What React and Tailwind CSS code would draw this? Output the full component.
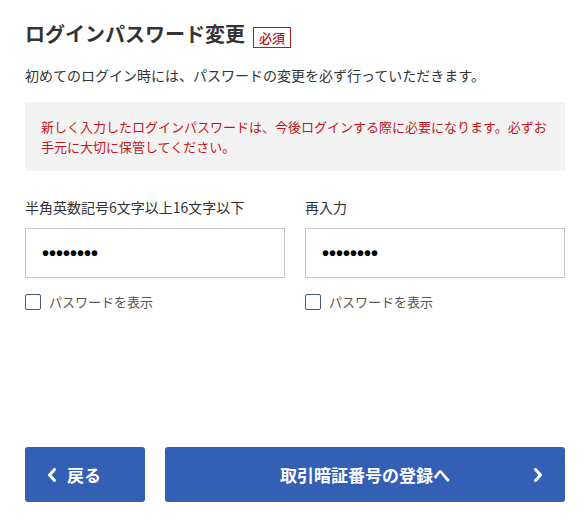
import React from "react";

const font = { fontFamily: '"Noto Sans CJK JP", "Noto Sans", sans-serif' };

function Check() {
  return (
    <label className="flex items-center h-[20px] gap-[8px] text-[13px] text-[#555]">
      <span className="w-[16px] h-[16px] border border-[#4b5b78] rounded-[2px] bg-white shrink-0" />
      <span>パスワードを表示</span>
    </label>
  );
}

function Field({ label }) {
  return (
    <div className="flex flex-col">
      <div className="text-[14px] leading-[20px] text-[#333]">{label}</div>
      <div className="mt-[11px] h-[50px] border border-[#c8c8c8] bg-white flex items-center pl-[16px]">
        <span className="text-[20px] font-bold text-black" style={{ fontFamily: '"Liberation Sans", sans-serif' }}>
          ••••••••
        </span>
      </div>
      <div className="mt-[14px]">
        <Check />
      </div>
    </div>
  );
}

export default function App() {
  return (
    <div className="w-[585px] h-[521px] bg-white pt-[17px] pl-[25px] pr-[20px]" style={font}>
      <h1 className="flex items-center h-[34px]">
        <span className="text-[20px] font-bold text-[#333] leading-[34px]">ログインパスワード変更</span>
        <span className="ml-[8px] mt-[6px] h-[21px] px-[5px] border border-[#b71c1c] text-[#b71c1c] text-[13px] leading-[19px] font-medium">
          必須
        </span>
      </h1>
      <p className="mt-[14px] text-[14px] leading-[20px] text-[#333]">
        初めてのログイン時には、パスワードの変更を必ず行っていただきます。
      </p>
      <div className="mt-[17px] bg-[#f3f3f3] px-[16px] pt-[15px] pb-[14px] text-[13px] leading-[20px] text-[#c4161c]">
        新しく入力したログインパスワードは、今後ログインする際に必要になります。必ずお手元に大切に保管してください。
      </div>
      <div className="mt-[26px] grid grid-cols-2 gap-x-[20px]">
        <Field label="半角英数記号6文字以上16文字以下" />
        <Field label="再入力" />
      </div>
      <div className="mt-[135px] flex gap-[20px]">
        <button className="w-[120px] h-[55px] rounded-[3px] bg-[#3360b5] text-white flex items-center pl-[22px] gap-[10px] text-[17px] font-bold">
          <svg width="10" height="14" viewBox="0 0 10 14">
            <polyline points="7.5,1.5 2.5,7 7.5,12.5" fill="none" stroke="white" strokeWidth="3" strokeLinecap="round" strokeLinejoin="round" />
          </svg>
          <span>戻る</span>
        </button>
        <button className="flex-1 h-[55px] rounded-[3px] bg-[#3360b5] text-white flex items-center px-[22px] text-[17px] font-bold">
          <span className="w-[10px]" />
          <span className="flex-1 text-center">取引暗証番号の登録へ</span>
          <svg width="10" height="14" viewBox="0 0 10 14">
            <polyline points="2.5,1.5 7.5,7 2.5,12.5" fill="none" stroke="white" strokeWidth="3" strokeLinecap="round" strokeLinejoin="round" />
          </svg>
        </button>
      </div>
    </div>
  );
}
